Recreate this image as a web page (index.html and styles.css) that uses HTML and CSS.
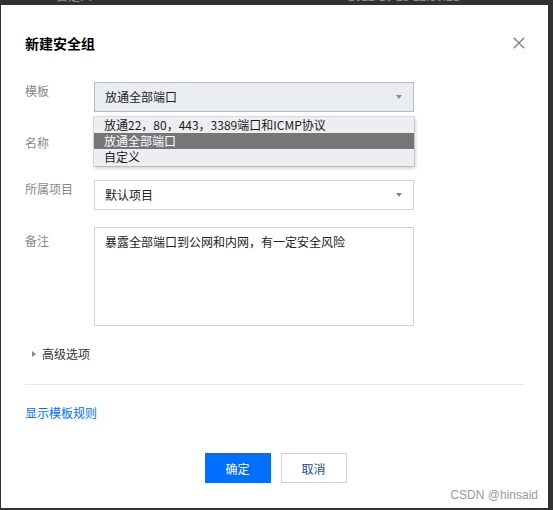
FILE: index.html
```html
<!DOCTYPE html>
<html lang="zh-CN">
<head>
<meta charset="utf-8">
<title>新建安全组</title>
<link rel="stylesheet" href="styles.css">
</head>
<body>
<div class="backdrop-strip">
  <div class="backdrop-line">
    <span class="bg-type">自定义</span>
    <span class="bg-date">2022-10-23 12:30:21</span>
  </div>
</div>
<div class="dialog">
  <div class="dialog-header">
    <h2 class="dialog-title">新建安全组</h2>
    <span class="close-btn" aria-label="关闭">
      <svg width="12" height="12" viewBox="0 0 12 12"><path d="M0.8 0.8 L11.2 11.2 M11.2 0.8 L0.8 11.2" stroke="#8a8a8a" stroke-width="1.6" fill="none"/></svg>
    </span>
  </div>
  <div class="form">
    <div class="form-row">
      <div class="form-label">模板</div>
      <div class="form-control">
        <div class="select select--active">
          <span class="select-value">放通全部端口</span>
          <span class="caret"></span>
        </div>
        <ul class="dropdown">
          <li class="dropdown-item">放通22，80，443，3389端口和ICMP协议</li>
          <li class="dropdown-item is-selected">放通全部端口</li>
          <li class="dropdown-item">自定义</li>
        </ul>
      </div>
    </div>
    <div class="form-row">
      <div class="form-label form-label--name">名称</div>
      <div class="form-control">
        <div class="input"></div>
      </div>
    </div>
    <div class="form-row">
      <div class="form-label">所属项目</div>
      <div class="form-control">
        <div class="select">
          <span class="select-value">默认项目</span>
          <span class="caret"></span>
        </div>
      </div>
    </div>
    <div class="form-row form-row--remark">
      <div class="form-label form-label--remark">备注</div>
      <div class="form-control">
        <div class="textarea">暴露全部端口到公网和内网，有一定安全风险</div>
      </div>
    </div>
  </div>
  <div class="advanced">
    <span class="advanced-arrow"></span>
    <span class="advanced-text">高级选项</span>
  </div>
  <div class="divider"></div>
  <a class="rule-link">显示模板规则</a>
  <div class="dialog-footer">
    <span class="btn btn--primary">确定</span>
    <span class="btn btn--weak">取消</span>
  </div>
</div>
<div class="watermark">CSDN @hinsaid</div>
</body>
</html>
```
FILE: styles.css
```css
* { box-sizing: border-box; }
html, body { margin: 0; padding: 0; }
body {
  width: 553px;
  height: 510px;
  overflow: hidden;
  background: #313131;
  font-family: "Noto Sans CJK SC", "Liberation Sans", sans-serif;
  font-size: 12px;
  color: #333;
  position: relative;
}
.backdrop-strip {
  height: 5px;
  overflow: hidden;
}
.backdrop-line {
  display: flex;
  margin-top: -11px;
  line-height: 16px;
  color: #8c8c8c;
  font-family: "Liberation Sans", "Noto Sans CJK SC", sans-serif;
  font-size: 12px;
  padding-left: 56px;
}
.bg-date { margin-left: 256px; }

.dialog {
  margin-left: 1px;
  width: 547px;
  height: 503px;
  background: #fff;
  padding: 0 23px 0 24px;
  display: flex;
  flex-direction: column;
}
.dialog-header {
  display: flex;
  justify-content: space-between;
  align-items: center;
  padding-top: 27px;
}
.dialog-title {
  margin: 0;
  font-size: 14px;
  line-height: 22px;
  font-weight: bold;
  color: #000;
}
.close-btn {
  display: flex;
  width: 12px;
  height: 12px;
}
.form {
  margin-top: 28px;
  display: flex;
  flex-direction: column;
  gap: 19px;
}
.form-row { display: flex; }
.form-row--remark { margin-top: -2px; }
.form-label {
  width: 69px;
  flex: none;
  color: #888;
  line-height: 18px;
}
.form-label--name { padding-top: 3px; }
.form-label--remark { padding-top: 5px; }
.form-control {
  width: 320px;
  position: relative;
}
.select, .input {
  height: 30px;
  border: 1px solid #cfd5de;
  display: flex;
  align-items: center;
  padding: 0 11px 0 10px;
  background: #fff;
  color: #222;
}
.select--active {
  background: #e9ecf1;
  border-color: #b5bcc8;
}
.select-value { flex: 1; line-height: 18px; }
.caret {
  width: 0;
  height: 0;
  border-left: 3.5px solid transparent;
  border-right: 3.5px solid transparent;
  border-top: 4px solid #8a8a8a;
}
.dropdown {
  position: absolute;
  top: 35px;
  left: 0;
  width: 320px;
  margin: 0;
  padding: 0 0 1px;
  list-style: none;
  background: #eceef2;
  box-shadow: 0 0 0 1px rgba(0,0,0,0.12), 1px 2px 4px rgba(0,0,0,0.22);
  z-index: 2;
}
.dropdown-item {
  height: 16px;
  line-height: 16px;
  padding-left: 10px;
  color: #1a1a1a;
  white-space: nowrap;
}
.dropdown-item.is-selected {
  background: #767676;
  color: #fff;
}
.textarea {
  height: 99px;
  border: 1px solid #cfd5de;
  padding: 4px 10px;
  line-height: 20px;
  color: #222;
}
.advanced {
  margin-top: 19px;
  display: flex;
  align-items: center;
  line-height: 18px;
  padding-left: 7px;
}
.advanced-arrow {
  width: 0;
  height: 0;
  border-top: 3.5px solid transparent;
  border-bottom: 3.5px solid transparent;
  border-left: 4px solid #888;
  margin-right: 6px;
}
.advanced-text { color: #333; }
.divider {
  margin-top: 21px;
  height: 1px;
  background: #e7e9ed;
}
.rule-link {
  margin-top: 19px;
  line-height: 18px;
  color: #006eff;
  align-self: flex-start;
}
.dialog-footer {
  margin-top: 31px;
  display: flex;
  justify-content: center;
  gap: 10px;
  padding-left: 1px;
}
.btn {
  width: 66px;
  height: 30px;
  display: flex;
  align-items: center;
  justify-content: center;
  font-size: 12px;
}
.btn--primary {
  background: #006eff;
  color: #fff;
}
.btn--weak {
  border: 1px solid #cfd5de;
  color: #1d4e9a;
  background: #fff;
}
.watermark {
  position: absolute;
  right: 15px;
  bottom: 7px;
  font-family: "Liberation Sans", sans-serif;
  font-size: 12px;
  line-height: 16px;
  color: #9a9a9a;
}
```
